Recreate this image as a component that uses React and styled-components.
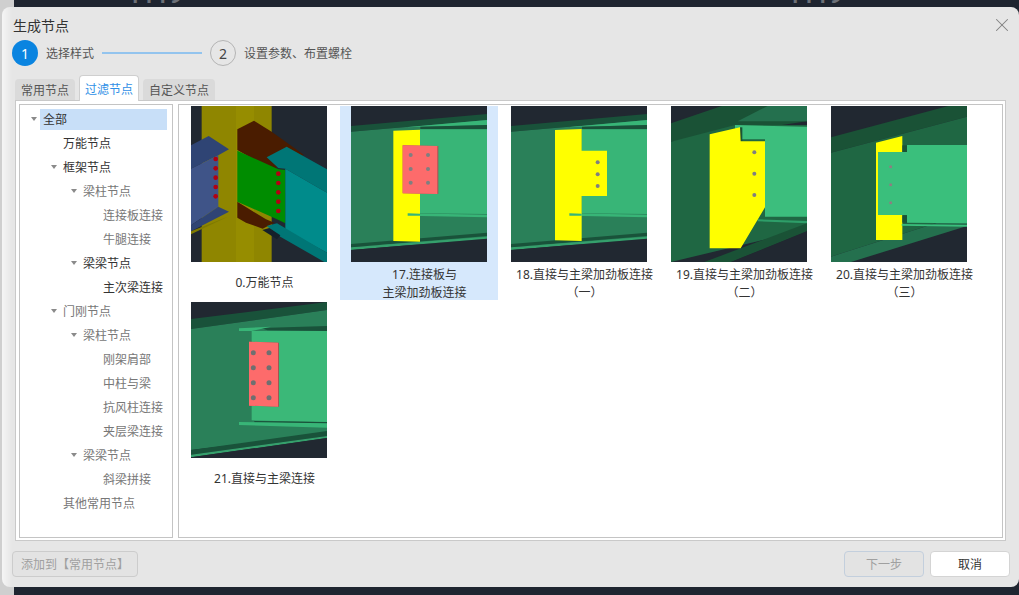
import React from "react";
import styled, { createGlobalStyle } from "styled-components";
import { X } from "lucide-react";

const GlobalStyle = createGlobalStyle`
  html, body {
    margin: 0;
    padding: 0;
    height: 100%;
    overflow: hidden;
  }
  body {
    font-family: "Noto Sans", "Noto Sans CJK SC", sans-serif;
    font-size: 12px;
    color: #333;
  }
`;

const Page = styled.div`
  position: relative;
  width: 1019px;
  height: 595px;
  box-sizing: border-box;
  padding: 7px 0 8px 2px;
  overflow: hidden;
  background: linear-gradient(to right, #cfcfcf 14px, #1f2530 14px);
`;

const BackdropLabel = styled.div`
  position: absolute;
  top: -21px;
  left: ${(p) => p.x}px;
  font-family: Roboto, sans-serif;
  font-size: 26px;
  font-weight: 500;
  letter-spacing: -1px;
  color: #6c7077;
`;

const Dialog = styled.div`
  position: relative;
  box-sizing: border-box;
  height: 580px;
  display: flex;
  flex-direction: column;
  padding: 9px 0 10px 0;
  border-radius: 8px;
  background: linear-gradient(to right, #f5f5f5, #e6e6e6 10px);
`;

const Title = styled.div`
  padding-left: 11px;
  font-size: 14px;
  line-height: 20px;
  color: #333;
`;

const CloseButton = styled.div`
  position: absolute;
  top: 7px;
  right: 6px;
  color: #808080;
  display: flex;
`;

const Steps = styled.div`
  display: flex;
  align-items: center;
  height: 26px;
  margin-top: 4px;
  padding-left: 10px;
`;

const StepCircle = styled.div`
  box-sizing: border-box;
  width: 26px;
  height: 26px;
  border-radius: 50%;
  display: flex;
  align-items: center;
  justify-content: center;
  font-size: 14px;
  color: ${(p) => (p.$active ? "#fff" : "#444")};
  background: ${(p) => (p.$active ? "#0a84e0" : "transparent")};
  border: ${(p) => (p.$active ? "none" : "1px solid #b4b4b4")};
`;

const StepLabel = styled.div`
  margin-left: 8px;
  color: #555;
`;

const StepLine = styled.div`
  width: 100px;
  height: 2px;
  margin: 0 8px;
  background: #93c4ee;
`;

const Tabs = styled.div`
  display: flex;
  align-items: flex-end;
  gap: 4px;
  height: 25px;
  margin: 9px 0 0 13px;
`;

const Tab = styled.div`
  position: relative;
  box-sizing: border-box;
  height: ${(p) => (p.$active ? 26 : 21)}px;
  padding: 0 ${(p) => (p.$active ? 5 : 6)}px;
  display: flex;
  align-items: center;
  border-radius: 4px 4px 0 0;
  margin-bottom: ${(p) => (p.$active ? -1 : 0)}px;
  color: ${(p) => (p.$active ? "#2f8fe6" : "#555")};
  background: ${(p) => (p.$active ? "#fff" : "#dadada")};
  border: ${(p) => (p.$active ? "1px solid #cfcfcf" : "none")};
  border-bottom: none;
  z-index: 1;
`;

const Pane = styled.div`
  box-sizing: border-box;
  height: 441px;
  margin: 0 13px;
  padding: 3px 2px 3px 3px;
  display: flex;
  gap: 5px;
  background: #fff;
  border: 1px solid #c9c9c9;
`;

const TreePanel = styled.div`
  box-sizing: border-box;
  width: 154px;
  height: 434px;
  padding-top: 2px;
  background: #fff;
  border: 1px solid #c4c4c4;
`;

const TreeRow = styled.div`
  display: flex;
  align-items: center;
  height: 24px;
  padding-left: ${(p) => 8 + p.$level * 20}px;
  padding-right: 5px;
`;

const Caret = styled.div`
  flex: none;
  width: 12px;
  display: flex;
  justify-content: center;
  &::before {
    content: "";
    display: ${(p) => (p.$open ? "block" : "none")};
    border-left: 3.5px solid transparent;
    border-right: 3.5px solid transparent;
    border-top: 4px solid #8a8a8a;
  }
`;

const TreeLabel = styled.div`
  flex: 1;
  height: 21px;
  line-height: 21px;
  padding-left: 3px;
  white-space: nowrap;
  color: ${(p) => (p.$muted ? "#777" : "#333")};
  background: ${(p) => (p.$selected ? "#c8dff8" : "transparent")};
`;

const Gallery = styled.div`
  box-sizing: border-box;
  flex: 1;
  height: 434px;
  padding: 1px;
  display: grid;
  grid-template-columns: repeat(auto-fill, 158px);
  grid-auto-rows: 194px;
  gap: 2px;
  align-content: start;
  background: #fff;
  border: 1px solid #c4c4c4;
`;

const Card = styled.div`
  display: flex;
  flex-direction: column;
  align-items: center;
  background: ${(p) => (p.$selected ? "#d6e8fc" : "transparent")};
`;

const Thumb = styled.svg`
  display: block;
  flex: none;
  width: 136px;
  height: 156px;
`;

const Caption = styled.div`
  flex: 1;
  display: flex;
  align-items: center;
  padding: 4px 0 0 11px;
  text-align: center;
  line-height: 18px;
  white-space: pre-line;
  color: #333;
`;

const Footer = styled.div`
  display: flex;
  align-items: center;
  gap: 6px;
  margin-top: 10px;
  padding: 0 9px 0 10px;
`;

const Button = styled.div`
  box-sizing: border-box;
  width: ${(p) => p.$width}px;
  height: 26px;
  display: flex;
  align-items: center;
  justify-content: center;
  border-radius: 4px;
  color: ${(p) => (p.$disabled ? "#a0a0a0" : "#333")};
  background: ${(p) => (p.$disabled ? "#e3e3e3" : "#fff")};
  border: 1px solid ${(p) => (p.$disabled ? p.$edge || "#cccccc" : "#d4d4d4")};
`;

const Spacer = styled.div`
  flex: 1;
`;

const TREE = [
  { label: "全部", level: 0, open: true, selected: true },
  { label: "万能节点", level: 1 },
  { label: "框架节点", level: 1, open: true },
  { label: "梁柱节点", level: 2, open: true, muted: true },
  { label: "连接板连接", level: 3, muted: true },
  { label: "牛腿连接", level: 3, muted: true },
  { label: "梁梁节点", level: 2, open: true },
  { label: "主次梁连接", level: 3 },
  { label: "门刚节点", level: 1, open: true, muted: true },
  { label: "梁柱节点", level: 2, open: true, muted: true },
  { label: "刚架肩部", level: 3, muted: true },
  { label: "中柱与梁", level: 3, muted: true },
  { label: "抗风柱连接", level: 3, muted: true },
  { label: "夹层梁连接", level: 3, muted: true },
  { label: "梁梁节点", level: 2, open: true, muted: true },
  { label: "斜梁拼接", level: 3, muted: true },
  { label: "其他常用节点", level: 1, muted: true },
];

const Bolts = ({ xs, ys, r = 6, fill = "#7f7f80" }) =>
  xs.map((x) =>
    ys.map((y) => <circle key={`${x}-${y}`} cx={x} cy={y} r={r} fill={fill} />)
  );

const Poly = ({ f, p }) => <polygon fill={f} points={p} />;

// drawn at 3x, coordinates read off the zoomed reference
const Universal = () => (
  <>
    <Poly f="#8f8600" p="32,0 242,0 242,468 32,468" />
    <Poly f="#968d00" p="135,0 189,0 189,468 135,468" />
    <Poly f="#4a1c00" p="139,70 189,44 242,77 338,146 300,170 240,190 139,132" />
    <Poly f="#4a1c00" p="139,287 225,340 250,350 215,368 165,350 139,335" />
    <Poly f="#008c00" p="139,134 262,190 283,192 283,352 258,340 139,287" />
    <Poly f="#007676" p="227,154 287,122 408,190 408,260 283,188 262,186" />
    <Poly f="#008b8b" p="283,188 408,260 408,440 283,372" />
    <Poly f="#007676" p="227,360 258,352 408,440 408,468 400,468 268,392" />
    <Poly f="#15202a" p="214,372 235,366 268,388 258,400" />
    <Poly f="#2f4474" p="0,118 53,90 114,130 82,148 0,188" />
    <Poly f="#3f5488" p="0,188 82,148 82,302 0,358" />
    <Poly f="#2f4474" p="0,358 82,302 114,317 0,376" />
    <Poly f="#7f7a00" p="0,376 110,332 0,385" />
    <Bolts xs={[74]} ys={[159, 187, 215, 243, 271]} r={7} fill="#b30012" />
    <Bolts xs={[262]} ys={[203, 231, 259, 287, 315]} r={7} fill="#b30012" />
  </>
);

const StraightBeam = ({ children, stiffener = 170 }) => (
  <>
    <Poly f="#19523a" p="0,60 408,24 408,42 0,77" />
    <Poly f="#2a8059" p="0,77 408,42 408,410 0,420" />
    <Poly f="#38b577" p={`${stiffener - 5},64 408,42 408,57 ${stiffener + 38},62`} />
    <Poly f="#19523a" p={`${stiffener + 38},62 408,57 408,70 ${stiffener + 38},70`} />
    <Poly f="#38b577" p={`${stiffener + 37},70 408,70 408,324 ${stiffener + 37},322`} />
    <Poly f="#38b577" p={`${stiffener},322 408,326 408,334 ${stiffener},329`} />
    <Poly f="#19523a" p="0,414 408,380 408,390 0,424" />
    <Poly f="#35a06c" p="0,424 408,392 408,398 0,432" />
    <Poly f="#212831" p="0,432 408,398 408,468 0,468" />
    {children}
  </>
);

const GussetPlate = () => (
  <StraightBeam>
    <Poly f="#ffff00" p="127,74 207,71 207,407 127,405" />
    <Poly f="#a85252" p="155,118 262,120 262,264 155,262" />
    <Poly f="#fd6b6b" p="155,118 259,120 259,264 155,262" />
    <Bolts xs={[179, 231]} ys={[147, 189, 230]} />
    <Poly f="#38b577" p="170,322 207,323 207,329 170,329" />
  </StraightBeam>
);

const ShearTab = () => (
  <StraightBeam stiffener={175}>
    <Poly f="#ffff00" p="132,72 212,69 212,134 288,134 288,270 212,270 212,405 132,403" />
    <Bolts xs={[260]} ys={[169, 205, 240]} />
    <Poly f="#38b577" p="175,322 212,323 212,329 175,329" />
  </StraightBeam>
);

const ShearTabSkew = () => (
  <>
    <Poly f="#1a5236" p="0,52 152,0 408,0 408,46 0,107" />
    <Poly f="#24704e" p="290,0 408,0 408,46 200,46" />
    <Poly f="#1f6743" p="0,107 192,57 408,57 408,370 0,468" />
    <Poly f="#3cbe7d" p="192,57 408,62 408,332 282,332 282,100 192,100" />
    <Poly f="#2e9e69" p="260,340 408,345 408,352 260,346" />
    <Poly f="#1a5236" p="100,468 408,352 408,376 180,468" />
    <Poly f="#212831" p="180,468 408,376 408,468" />
    <Poly f="#1a5236" p="207,64 214,64 214,106 207,106" />
    <Poly f="#ffff00" p="116,85 207,64 209,106 282,106 282,304 209,427 116,427" />
    <Bolts xs={[250]} ys={[139, 203, 267]} />
  </>
);

const CopedBeam = () => (
  <>
    <Poly f="#1a5236" p="0,94 352,0 408,0 408,32 0,140" />
    <Poly f="#1f6743" p="0,140 408,32 408,322 0,452" />
    <Poly f="#24704e" p="0,452 408,322 408,360 60,468 0,468" />
    <Poly f="#ffff00" p="135,110 214,90 214,402 135,402" />
    <Poly f="#1a5236" p="214,118 228,118 228,138 214,138" />
    <Poly f="#1a5236" p="214,328 228,328 228,350 214,350" />
    <Poly f="#3abf7c" p="228,117 408,117 408,352 228,350 228,327 141,327 141,138 228,138" />
    <Poly f="#3abf7c" p="212,354 408,357 408,362 212,359" />
    <Bolts xs={[179]} ys={[182, 236, 290]} r={4.5} fill="#8d7f80" />
  </>
);

const SplicePlate = () => (
  <>
    <Poly f="#19523a" p="0,51 408,0 408,24 0,81" />
    <Poly f="#2a8059" p="0,81 408,24 408,395 0,444" />
    <Poly f="#3bb878" p="182,87 408,87 408,361 182,355" />
    <Poly f="#19523a" p="210,78 408,72 408,87 230,85" />
    <Poly f="#38b577" p="144,79 240,74 182,87 144,87" />
    <Poly f="#19523a" p="190,357 408,360 408,365 190,361" />
    <Poly f="#38b577" p="144,360 408,364 408,377 144,369" />
    <Poly f="#19523a" p="0,444 408,387 408,402 0,458" />
    <Poly f="#35a06c" p="0,458 408,402 408,408 0,466" />
    <Poly f="#212831" p="0,466 408,408 408,468 0,468" />
    <Poly f="#a85252" p="174,119 264,122 264,314 174,311" />
    <Poly f="#fd6b6b" p="174,119 261,122 261,314 174,311" />
    <Bolts xs={[187, 234]} ys={[152, 197, 242, 287]} r={7.5} fill="#6f6f70" />
  </>
);

const NODES = [
  { caption: "0.万能节点", Art: Universal },
  { caption: "17.连接板与\n主梁加劲板连接", Art: GussetPlate, selected: true },
  { caption: "18.直接与主梁加劲板连接\n（一）", Art: ShearTab },
  { caption: "19.直接与主梁加劲板连接\n（二）", Art: ShearTabSkew },
  { caption: "20.直接与主梁加劲板连接\n（三）", Art: CopedBeam },
  { caption: "21.直接与主梁连接", Art: SplicePlate },
];

export default function App() {
  return (
    <Page>
      <GlobalStyle />
      <BackdropLabel x={127}>1119</BackdropLabel>
      <BackdropLabel x={787}>1119</BackdropLabel>
      <Dialog>
        <Title>生成节点</Title>
        <CloseButton>
          <X size={22} strokeWidth={1.1} />
        </CloseButton>
        <Steps>
          <StepCircle $active>1</StepCircle>
          <StepLabel>选择样式</StepLabel>
          <StepLine />
          <StepCircle>2</StepCircle>
          <StepLabel>设置参数、布置螺栓</StepLabel>
        </Steps>
        <Tabs>
          <Tab>常用节点</Tab>
          <Tab $active>过滤节点</Tab>
          <Tab>自定义节点</Tab>
        </Tabs>
        <Pane>
          <TreePanel>
            {TREE.map((node, i) => (
              <TreeRow key={i} $level={node.level}>
                <Caret $open={node.open} />
                <TreeLabel $muted={node.muted} $selected={node.selected}>
                  {node.label}
                </TreeLabel>
              </TreeRow>
            ))}
          </TreePanel>
          <Gallery>
            {NODES.map(({ caption, Art, selected }) => (
              <Card key={caption} $selected={selected}>
                <Thumb viewBox="0 0 408 468">
                  <rect width="408" height="468" fill="#212831" />
                  <Art />
                </Thumb>
                <Caption>{caption}</Caption>
              </Card>
            ))}
          </Gallery>
        </Pane>
        <Footer>
          <Button $width={126} $disabled>
            添加到【常用节点】
          </Button>
          <Spacer />
          <Button $width={80} $disabled $edge="#c3cfdd">
            下一步
          </Button>
          <Button $width={80}>取消</Button>
        </Footer>
      </Dialog>
    </Page>
  );
}
